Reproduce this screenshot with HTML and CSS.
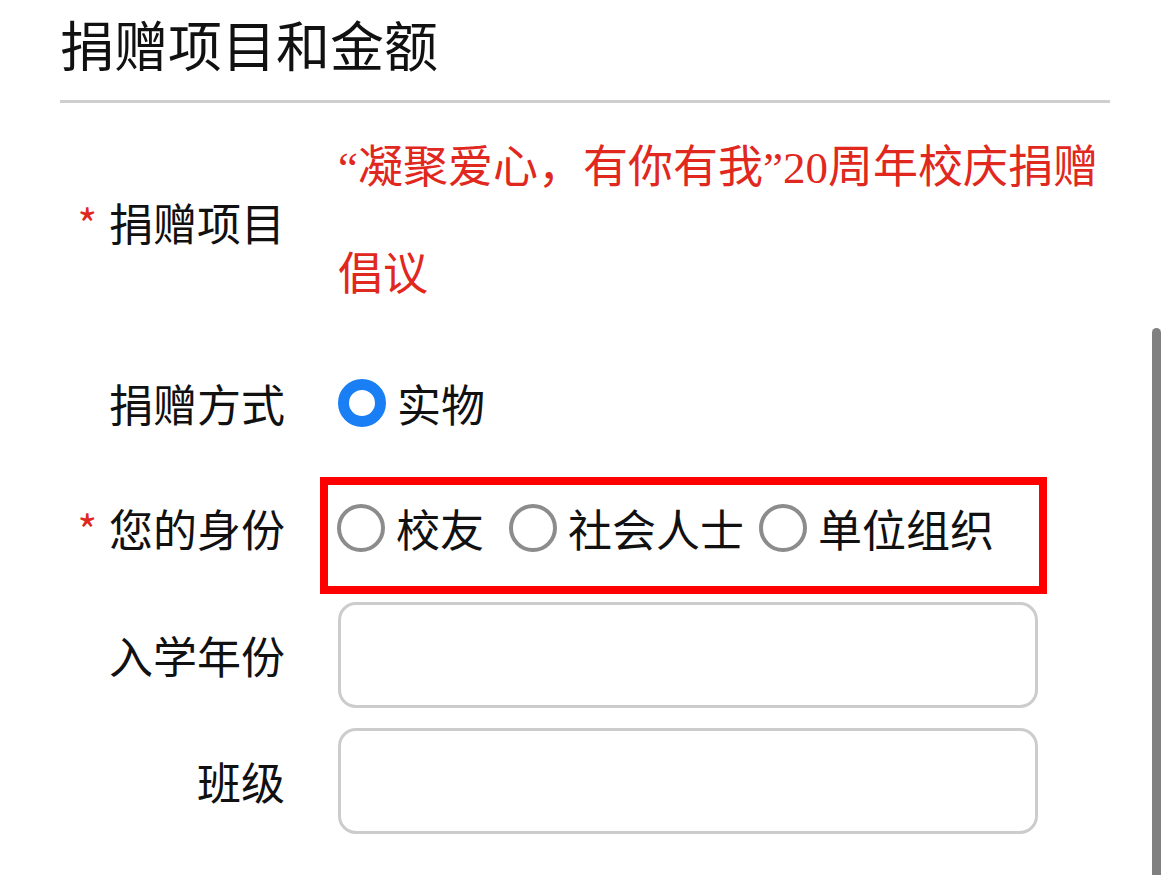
FILE: index.html
```html
<!DOCTYPE html>
<html lang="zh-CN">
<head>
<meta charset="utf-8">
<title>捐赠项目和金额</title>
<link rel="stylesheet" href="styles.css">
</head>
<body>
<div class="page">
  <h2 class="title">捐赠项目和金额</h2>
  <div class="form">
    <div class="row">
      <div class="label"><span class="req">*</span>捐赠项目</div>
      <div class="value project">“凝聚爱心，有你有我”20周年校庆捐赠倡议</div>
    </div>
    <div class="row">
      <div class="label">捐赠方式</div>
      <div class="value radios">
        <label class="radio"><span class="dot checked"></span>实物</label>
      </div>
    </div>
    <div class="row row-identity">
      <div class="label"><span class="req">*</span>您的身份</div>
      <div class="value radios highlight">
        <label class="radio r1"><span class="dot"></span>校友</label>
        <label class="radio r2"><span class="dot"></span>社会人士</label>
        <label class="radio"><span class="dot"></span>单位组织</label>
      </div>
    </div>
    <div class="row row-input">
      <div class="label">入学年份</div>
      <div class="value"><div class="input"></div></div>
    </div>
    <div class="row row-input last">
      <div class="label">班级</div>
      <div class="value"><div class="input"></div></div>
    </div>
  </div>
</div>
<div class="scrollbar"></div>
</body>
</html>
```

FILE: styles.css
```css
html, body {
  margin: 0;
  background: #ffffff;
}
body {
  font-family: "Noto Sans CJK SC", "Noto Sans", sans-serif;
  color: #111111;
  overflow: hidden;
}
.page {
  width: 1050px;
  padding: 0 60px;
}
.title {
  margin: 0;
  font-size: 54px;
  font-weight: 400;
  line-height: 88px;
  padding-bottom: 12px;
  border-bottom: 3px solid #cfcfcf;
}
.form {
  padding-top: 12px;
}
.row {
  display: flex;
  align-items: center;
  margin-bottom: 50px;
}
.label {
  flex: none;
  width: 225px;
  margin-right: 53px;
  text-align: right;
  font-size: 44px;
  line-height: 48px;
  white-space: nowrap;
}
.req {
  color: #e0281e;
  font-size: 42px;
  margin-right: 12px;
}
.project {
  width: 772px;
  font-family: "Liberation Serif", "Noto Sans CJK SC", serif;
  color: #e0281e;
  font-size: 45px;
  line-height: 107px;
}
.radios {
  display: flex;
  align-items: center;
}
.radio {
  display: flex;
  align-items: center;
  font-size: 44px;
  line-height: 48px;
}
.dot {
  box-sizing: border-box;
  width: 48px;
  height: 48px;
  border-radius: 50%;
  border: 4px solid #8c8c8c;
  margin-right: 11px;
  background: #ffffff;
}
.dot.checked {
  border: 11.5px solid #1a7ff5;
}
.r1 { margin-right: 25px; }
.r2 { margin-right: 15px; }
.row-identity {
  align-items: flex-start;
  margin-bottom: 8px;
}
.row-identity .label {
  margin-top: 27px;
  margin-right: 35px;
}
.highlight {
  width: 702px;
  border: 8px solid #ff0000;
  padding: 19px 0 34px 9px;
}
.row-input {
  margin-bottom: 20px;
}
.input {
  box-sizing: border-box;
  width: 700px;
  height: 106px;
  border: 3px solid #cccccc;
  border-radius: 18px;
  background: #ffffff;
}
.scrollbar {
  position: fixed;
  right: 9px;
  top: 328px;
  bottom: 0;
  width: 9px;
  background: #808080;
  border-radius: 5px 5px 0 0;
}
```
